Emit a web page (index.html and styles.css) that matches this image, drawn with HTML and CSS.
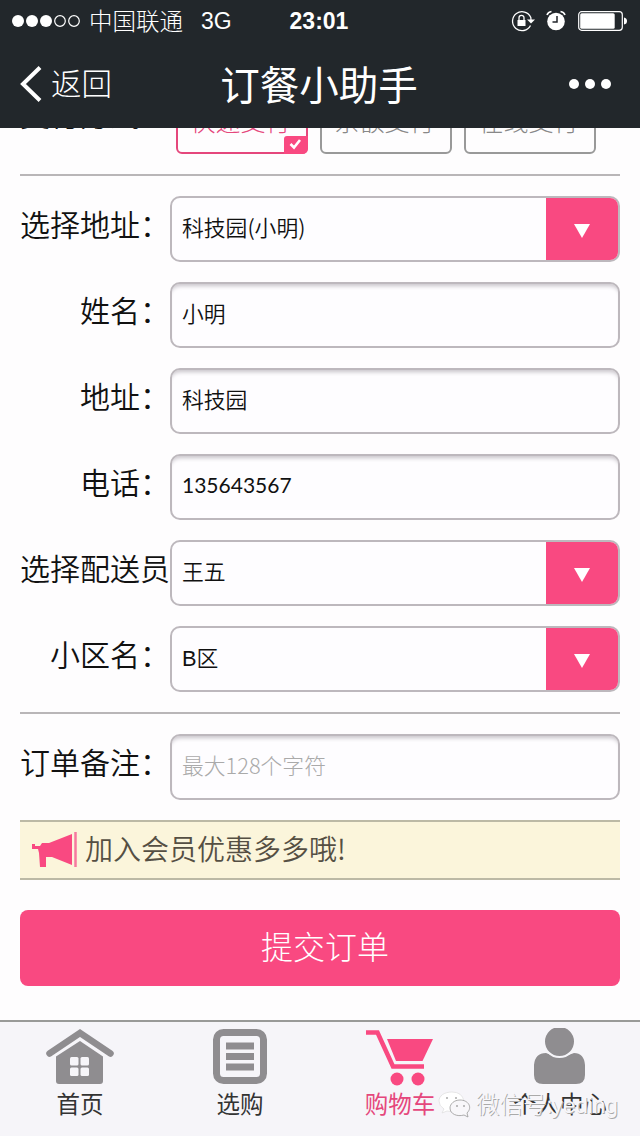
FILE: index.html
```html
<!DOCTYPE html>
<html lang="zh-CN">
<head>
<meta charset="utf-8">
<title>订餐小助手</title>
<link rel="stylesheet" href="styles.css">
</head>
<body>
<div class="screen">
  <header class="header">
    <div class="status">
      <div class="status-left">
        <svg class="signal" width="68" height="14" viewBox="0 0 68 14"><g fill="#fff"><circle cx="6" cy="7" r="6"/><circle cx="20" cy="7" r="6"/><circle cx="34" cy="7" r="6"/></g><g fill="none" stroke="#fff" stroke-width="1.2"><circle cx="48" cy="7" r="5.3"/><circle cx="62" cy="7" r="5.3"/></g></svg>
        <span class="carrier">中国联通</span>
        <span class="network">3G</span>
      </div>
      <div class="clock">23:01</div>
      <div class="status-right">
        <svg width="24" height="22" viewBox="0 0 24 22"><path d="M19.5 15.5A9.5 9.5 0 1 1 19.8 7.5L20 10" fill="none" stroke="#fff" stroke-width="1.3"/><path d="M16 9.5h8l-4 4z" fill="#fff"/><path d="M6.5 10h8v6h-8z" fill="#fff"/><path d="M8 10V7.8a2.5 2.5 0 0 1 5 0V10" fill="none" stroke="#fff" stroke-width="1.3"/></svg>
        <svg width="20" height="22" viewBox="0 0 20 22"><circle cx="10" cy="11.5" r="8.8" fill="#fff"/><path d="M11 6v6H6.5" fill="none" stroke="#22262b" stroke-width="1.5"/><path d="M1 5q1-3 4.500-3.500M19 5q-1-3-4.500-3.500" fill="none" stroke="#fff" stroke-width="1.6"/></svg>
        <svg width="50" height="20" viewBox="0 0 50 20"><rect x=".7" y=".7" width="43.600" height="18.600" rx="3" fill="none" stroke="#fff" stroke-width="1.200"/><rect x="2.200" y="2.200" width="34.500" height="15.600" rx="1.500" fill="#fff"/><path d="M46 6.500q3 .5 3 3.500t-3 3.500z" fill="#fff"/></svg>
      </div>
    </div>
    <div class="navbar">
      <div class="back">
        <svg width="22" height="36" viewBox="0 0 22 36"><path d="M20 1.500L3 18l17 16.500" fill="none" stroke="#fff" stroke-width="4"/></svg>
        <span>返回</span>
      </div>
      <div class="title">订餐小助手</div>
      <div class="more"><i></i><i></i><i></i></div>
    </div>
  </header>

  <main class="content">
    <div class="pay">
      <div class="pay-label">支付方式：</div>
      <div class="option selected">快速支付
        <svg class="check" width="24" height="18" viewBox="0 0 24 18"><path d="M0 18V3q0-3 3-3h21v12q0 6-6 6z" fill="#f94981"/><path d="M6.500 8l3.500 3.500L16 4" fill="none" stroke="#fff" stroke-width="2.600"/></svg>
      </div>
      <div class="option">余额支付</div>
      <div class="option">在线支付</div>
    </div>

    <section class="group">
      <div class="row"><div class="label">选择地址：</div><div class="field select"><span>科技园(小明)</span><div class="arrow"></div></div></div>
      <div class="row"><div class="label">姓名：</div><div class="field input">小明</div></div>
      <div class="row"><div class="label">地址：</div><div class="field input">科技园</div></div>
      <div class="row"><div class="label">电话：</div><div class="field input digits">135643567</div></div>
      <div class="row"><div class="label">选择配送员</div><div class="field select"><span>王五</span><div class="arrow"></div></div></div>
      <div class="row"><div class="label">小区名：</div><div class="field select"><span><span class="latin">B</span>区</span><div class="arrow"></div></div></div>
    </section>

    <section class="group">
      <div class="row"><div class="label">订单备注：</div><div class="field input placeholder">最大128个字符</div></div>
    </section>

    <div class="notice">
      <svg width="46" height="38" viewBox="0 0 46 38"><path d="M0 13h3v2h5l2-3h7L40 3v31l-20-8h-6v10H8L7 22l-1-4H0z" fill="#f94981"/><path d="M43.500 1v35" stroke="#f7789f" stroke-width="2.500"/></svg>
      <span>加入会员优惠多多哦!</span>
    </div>
    <div class="submit">提交订单</div>
  </main>

  <nav class="tabs">
    <div class="tab">
      <svg width="70" height="58" viewBox="0 0 70 58"><path d="M4.500 25.500L35 5l30.500 20.500" fill="none" stroke="#8f8d90" stroke-width="6.500" stroke-linecap="round"/><path d="M11 28.500L35 13l23 15.500V53q0 3-3 3H14q-3 0-3-3z" fill="#8f8d90"/><g fill="#f6f5f9"><rect x="25" y="29" width="8.500" height="8.500" rx="1.500"/><rect x="35.500" y="29" width="8.500" height="8.500" rx="1.500"/><rect x="25" y="39.500" width="8.500" height="8.500" rx="1.500"/><rect x="35.500" y="39.500" width="8.500" height="8.500" rx="1.500"/></g></svg>
      <span>首页</span>
    </div>
    <div class="tab">
      <svg width="70" height="58" viewBox="0 0 70 58"><rect x="11.500" y="4.500" width="47" height="48" rx="7" fill="none" stroke="#8f8d90" stroke-width="7"/><path d="M21 18h28M21 28.500h28M21 39h28" stroke="#8f8d90" stroke-width="7"/></svg>
      <span>选购</span>
    </div>
    <div class="tab active">
      <svg width="70" height="58" viewBox="0 0 70 58"><path d="M1 4.500h11.500L28 38.500h31" fill="none" stroke="#f94981" stroke-width="4.500"/><path d="M22 11h46L57.500 33H31z" fill="#f94981"/><circle cx="32" cy="51" r="6.500" fill="#f94981"/><circle cx="53" cy="51" r="6.500" fill="#f94981"/></svg>
      <span>购物车</span>
    </div>
    <div class="tab">
      <svg width="70" height="58" viewBox="0 0 70 58"><path d="M9 47V37q1-12 12-12 14 7 28 0 10 0 11 12v10q0 9-9 9H18q-9 0-9-9z" fill="#8f8d90"/><circle cx="34.500" cy="13.500" r="15.500" fill="#8f8d90" stroke="#f6f5f9" stroke-width="2"/></svg>
      <span>个人中心</span>
    </div>
    <div class="watermark">
      <svg width="34" height="28" viewBox="0 0 34 28"><path d="M14 1C6 1 1 5 1 10q0 5 5 8l-2 4 5-2q4 1 7 0 0-9 10-10Q24 1 14 1z" fill="#fff" stroke="#ddd" stroke-width=".7"/><path d="M22 9c-6 0-10 4-10 8 0 6 7 9 14 7l4 2-1-4c6-6 1-13-7-13z" fill="#f8f7fa" stroke="#999" stroke-width=".8"/><g fill="#aaa"><circle cx="9" cy="7" r="1"/><circle cx="18" cy="7" r="1"/><circle cx="19" cy="15" r="1"/><circle cx="26" cy="15" r="1"/></g></svg>
      <span>微信号: <span class="account">yeding</span></span>
    </div>
  </nav>
</div>
</body>
</html>
```

FILE: styles.css
```css
* { box-sizing: border-box; }
body { margin: 0; font-family: "Noto Sans CJK SC", sans-serif; font-weight: 350; color: #111; }
svg { display: block; flex: none; }
.screen { width: 640px; height: 1136px; display: flex; flex-direction: column; overflow: hidden; background: #fefdfe; }

.header { flex: none; height: 128px; background: #22272b; color: #fff; z-index: 1; }
.status { height: 40px; display: grid; grid-template-columns: 1fr auto 1fr; align-items: center; padding: 1px 12px 0 12px; }
.status-left { display: flex; align-items: center; white-space: nowrap; }
.carrier { font-size: 23.5px; line-height: 34px; margin: -2px 0 0 9px; font-weight: 300; }
.network { font: 23px/36px "Liberation Sans", sans-serif; margin-left: 18px; }
.clock { font: bold 23px/36px "Liberation Sans", sans-serif; margin-left: -2px; }
.status-right { display: flex; justify-content: flex-end; align-items: center; }
.status-right svg:nth-child(2) { margin: 0 12px 0 11px; }
.navbar { height: 88px; display: grid; grid-template-columns: 1fr auto 1fr; align-items: center; padding: 0 29px 0 20px; }
.back { display: flex; align-items: center; gap: 9px; font-size: 30.5px; line-height: 44px; font-weight: 300; }
.back span { padding-bottom: 5px; }
.title { font-size: 39.5px; line-height: 58px; font-weight: 400; padding: 0 0 3px 7px; }
.more { display: flex; justify-content: flex-end; gap: 6px; }
.more i { width: 10px; height: 10px; border-radius: 50%; background: #fff; }

.content { flex: 1; min-height: 0; overflow: hidden; padding: 0 20px; }
.pay { height: 84px; margin-top: -36px; display: flex; border-bottom: 2px solid #b9b6b8; }
.pay-label { width: 156px; font-size: 30px; line-height: 43px; white-space: nowrap; }
.option { position: relative; width: 132px; height: 62px; margin-right: 12px; border: 2px solid #999; border-radius: 6px; color: #888; font-size: 25px; line-height: 52px; text-align: center; font-weight: 300; padding-right: 3px; }
.selected { border-color: #e5477c; color: #e5477c; }
.check { position: absolute; right: -2px; bottom: -2px; }

.group { display: flex; flex-direction: column; gap: 20px; padding: 20px 0; }
.group + .group { border-top: 2px solid #b9b6b8; }
.row { display: flex; height: 66px; }
.label { width: 150px; font-size: 30px; line-height: 55px; text-align: right; white-space: nowrap; }
.field { width: 450px; border: 2px solid #bdb8bd; border-radius: 10px; background: #fefdff; font-size: 21.8px; line-height: 58px; padding-left: 10px; overflow: hidden; }
.input { box-shadow: inset 0 5px 4px -3px #c6c2c8; }
.digits { font-family: Lato, sans-serif; font-weight: 400; font-size: 21px; line-height: 58px; }
.latin { font-family: "Liberation Sans", sans-serif; }
.placeholder { color: #aaa; font-weight: 300; }
.select { display: flex; justify-content: space-between; }
.arrow { width: 72px; background: #f94981; display: flex; align-items: center; justify-content: center; }
.arrow::before { content: ""; border: 8px solid transparent; border-top: 14px solid #fff; border-bottom: 0; margin-top: 3px; }

.notice { height: 60px; display: flex; align-items: center; gap: 7px; padding-left: 12px; border: solid #bcb9a5; border-width: 2px 0; background: #fbf5db; color: #554f43; font-size: 28px; line-height: 56px; }
.notice span { padding-bottom: 3px; line-height: 53px; }
.submit { height: 76px; margin-top: 30px; border-radius: 8px; background: #f94981; color: #fff; font-size: 32px; line-height: 70px; text-align: center; padding-left: 10px; font-weight: 300; }

.tabs { flex: none; position: relative; height: 116px; display: flex; border-top: 2px solid #999a98; background: #f6f5f9; }
.tab { width: 160px; display: flex; flex-direction: column; align-items: center; padding-top: 6px; color: #333; font-size: 23.5px; line-height: 34px; font-weight: 400; }
.active { color: #e5477c; }
.watermark { position: absolute; left: 438px; top: 65px; display: flex; align-items: center; gap: 4px; color: #f8f7fa; font-size: 23.5px; line-height: 32px; font-weight: 300; text-shadow: 1px 1px 0 #aaa; white-space: nowrap; }
.account { font-family: "Liberation Sans", sans-serif; font-size: 22.5px; margin-left: -6px; }
```
